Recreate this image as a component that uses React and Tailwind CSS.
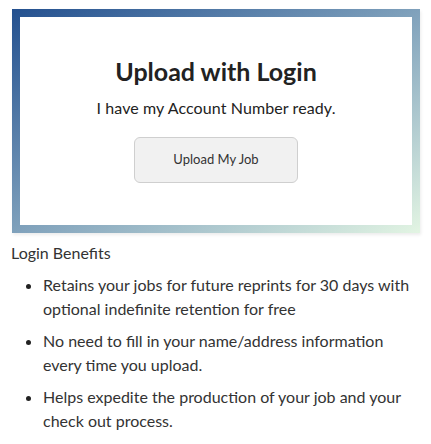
import React from 'react';

const benefits = [
    'Retains your jobs for future reprints for 30 days with optional indefinite retention for free',
    'No need to fill in your name/address information every time you upload.',
    'Helps expedite the production of your job and your check out process.',
];

const App = () => {
    return (
        <div className="w-[431px] min-h-[444px] bg-white text-[#333] font-['Lato',sans-serif] pt-[9px]">
            {/* Gradient frame */}
            <div className="mx-[12px] w-[408px] p-[8px] bg-gradient-to-br from-[#23508f] to-[#e3f5e3] shadow-[1px_2px_3px_rgba(0,0,0,0.08)]">
                <div className="bg-white h-[208px] flex flex-col items-center pt-[38px]">
                    <h2 className="text-[25px] leading-[32px] font-bold text-[#222]">Upload with Login</h2>
                    <p className="mt-[9px] text-[16px] leading-[24px] tracking-[0.1px] text-[#222]">I have my Account Number ready.</p>
                    <button className="mt-[17px] w-[164px] h-[46px] rounded-[6px] border border-[#cfcfcf] bg-[#f1f1f1] text-[13px] text-[#333]">
                        Upload My Job
                    </button>
                </div>
            </div>

            <div className="px-[11px] pt-[8px]">
                <div className="text-[16px] leading-[24px]">Login Benefits</div>
                <ul className="mt-[8px] pl-[32px] pr-[10px] list-disc text-[16px] leading-[24px] marker:text-[#222]">
                    {benefits.map((b) => (
                        <li key={b} className="mb-[8px]">{b}</li>
                    ))}
                </ul>
            </div>
        </div>
    );
};

export default App;
